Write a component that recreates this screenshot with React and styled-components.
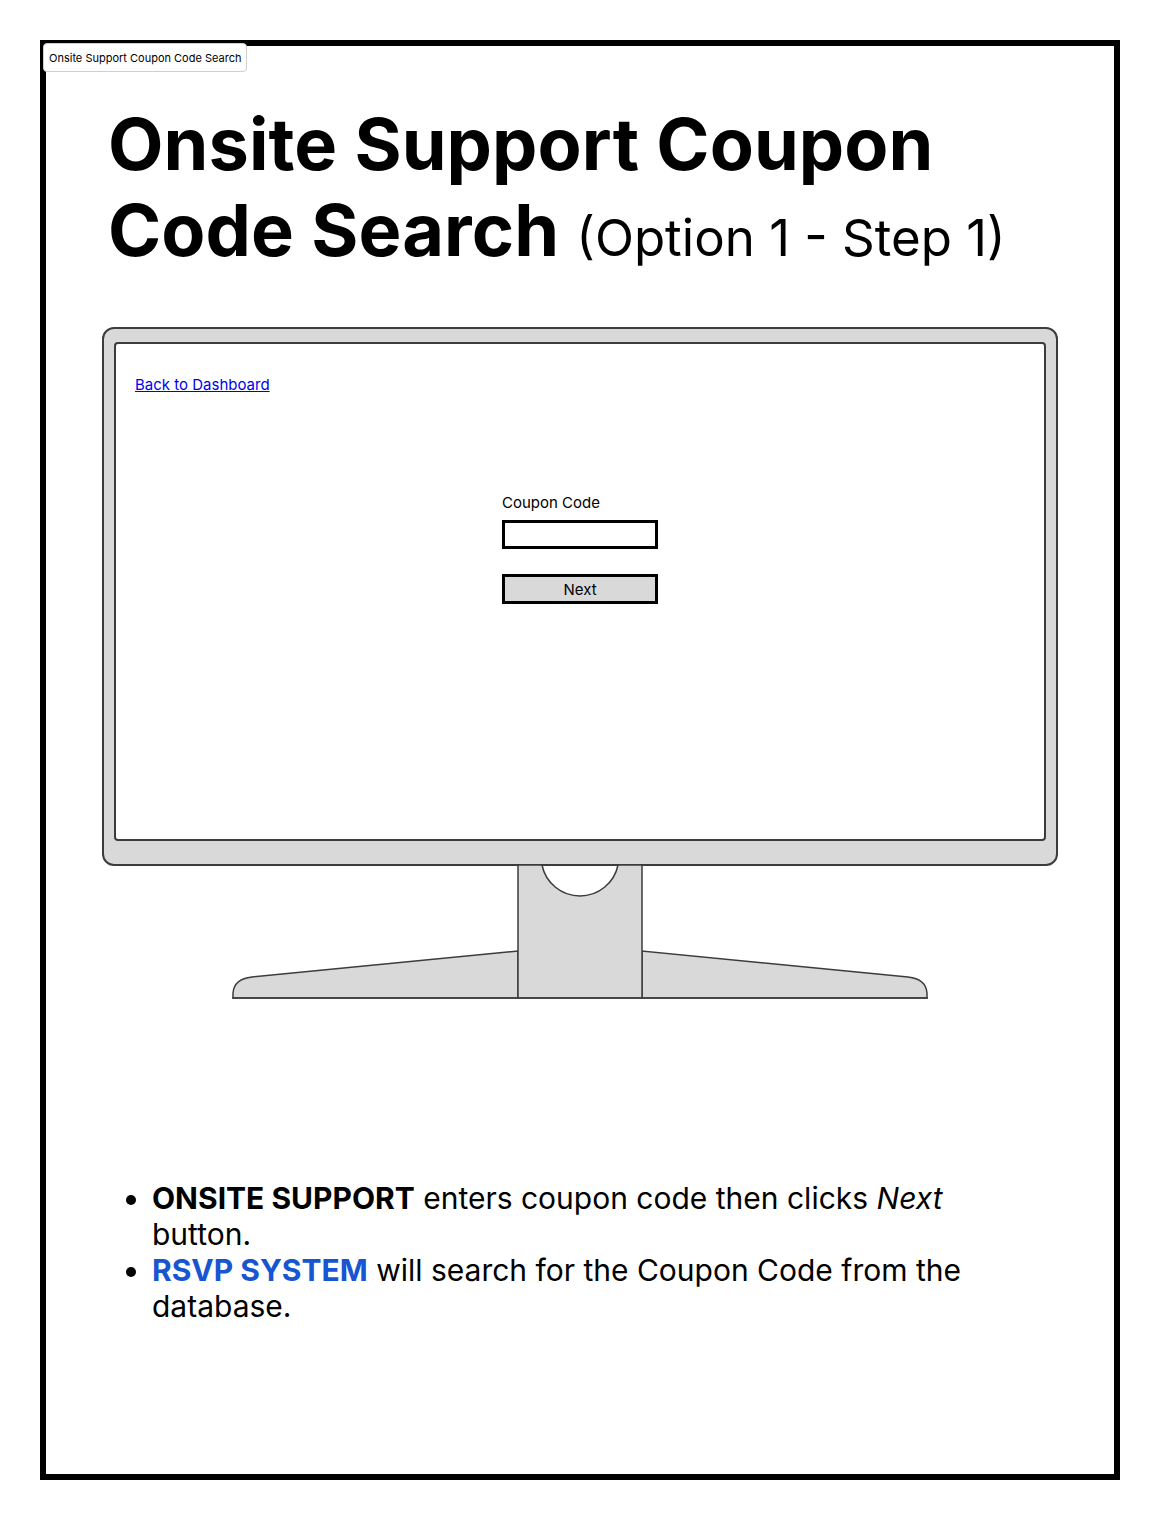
import styled, { createGlobalStyle } from "styled-components";

const GlobalStyle = createGlobalStyle`
  html, body {
    margin: 0;
    padding: 0;
    background: #fff;
    font-family: Inter, "Noto Sans", sans-serif;
    color: #000;
  }
`;

const Page = styled.div`
  padding: 40px;
  width: 1080px;
`;

const Frame = styled.div`
  position: relative;
  box-sizing: border-box;
  width: 1080px;
  height: 1440px;
  border: 6px solid #000;
  background: #fff;
`;

const Tab = styled.div`
  position: absolute;
  top: -3px;
  left: -3px;
  box-sizing: border-box;
  height: 29px;
  padding: 0 5px;
  display: flex;
  align-items: center;
  font-size: 11px;
  background: #fff;
  border: 1px solid #cfcfcf;
  border-radius: 4px;
`;

const Title = styled.h1`
  margin: 0;
  padding: 55px 62px 0;
  font-size: 72px;
  line-height: 86px;
  font-weight: 700;
  letter-spacing: 0.1px;
`;

const Sub = styled.span`
  font-size: 51px;
  font-weight: 400;
  letter-spacing: 0;
`;

const Monitor = styled.div`
  margin: 46px 56px 0;
`;

const Bezel = styled.div`
  box-sizing: border-box;
  height: 539px;
  background: #d9d9d9;
  border: 2px solid #3c3c3c;
  border-radius: 12px;
  padding: 13px 10px 23px;
`;

const Screen = styled.div`
  box-sizing: border-box;
  height: 100%;
  background: #fff;
  border: 2px solid #3c3c3c;
  border-radius: 4px;
  padding: 30px 19px;
`;

const BackLink = styled.a`
  font-size: 15px;
  color: #0000ee;
  text-decoration: underline;
`;

const Form = styled.div`
  width: 156px;
  margin: 100px auto 0;
  display: flex;
  flex-direction: column;
`;

const Label = styled.label`
  font-size: 15px;
  line-height: 18px;
  margin-bottom: 8px;
`;

const Input = styled.input`
  box-sizing: border-box;
  width: 156px;
  height: 29px;
  border: 3px solid #000;
  padding: 0 4px;
  font: inherit;
  outline: none;
`;

const Button = styled.button`
  box-sizing: border-box;
  margin-top: 25px;
  width: 156px;
  height: 30px;
  border: 3px solid #000;
  background: #d9d9d9;
  font-family: Inter, sans-serif;
  font-size: 15px;
  color: #000;
  padding: 0;
`;

const Stand = styled.svg`
  display: block;
  margin: -1px auto 0;
`;

const Notes = styled.ul`
  margin: 181px 0 0 80px;
  padding-left: 26px;
  width: 850px;
  font-size: 30px;
  line-height: 36px;
  list-style: disc;
`;

const Strong = styled.b`
  font-weight: 700;
  color: ${(p) => p.$color || "#000"};
`;

const StandArt = () => (
  <Stand width="696" height="134" viewBox="0 0 696 134">
    <path
      d="M1 133 L1 128 Q2 114 20 112 L286 86 L286 133 Z"
      fill="#d9d9d9"
      stroke="#3c3c3c"
      strokeWidth="1.5"
    />
    <path
      d="M695 133 L695 128 Q694 114 676 112 L410 86 L410 133 Z"
      fill="#d9d9d9"
      stroke="#3c3c3c"
      strokeWidth="1.5"
    />
    <path
      d="M286 0 L310 0 A38.8 38.8 0 0 0 386 0 L410 0 L410 133 L286 133 Z"
      fill="#d9d9d9"
      stroke="#3c3c3c"
      strokeWidth="1.5"
    />
    <line x1="0" y1="133" x2="696" y2="133" stroke="#3c3c3c" strokeWidth="1.5" />
  </Stand>
);

export default function App() {
  return (
    <Page>
      <GlobalStyle />
      <Frame>
        <Tab>Onsite Support Coupon Code Search</Tab>
        <Title>
          Onsite Support Coupon Code Search <Sub>(Option 1 - Step 1)</Sub>
        </Title>
        <Monitor>
          <Bezel>
            <Screen>
              <BackLink href="#">Back to Dashboard</BackLink>
              <Form>
                <Label htmlFor="coupon">Coupon Code</Label>
                <Input id="coupon" type="text" />
                <Button type="button">Next</Button>
              </Form>
            </Screen>
          </Bezel>
          <StandArt />
        </Monitor>
        <Notes>
          <li>
            <Strong>ONSITE SUPPORT</Strong> enters coupon code then clicks <i>Next</i> button.
          </li>
          <li>
            <Strong $color="#1755d1">RSVP SYSTEM</Strong> will search for the Coupon Code from the database.
          </li>
        </Notes>
      </Frame>
    </Page>
  );
}
